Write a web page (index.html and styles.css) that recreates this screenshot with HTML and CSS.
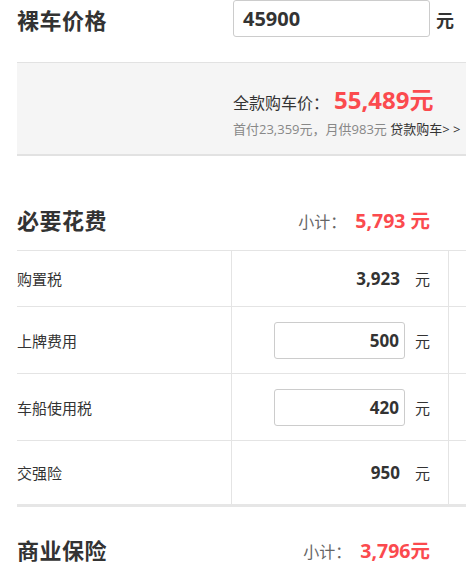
FILE: index.html
```html
<!DOCTYPE html>
<html lang="zh">
<head>
<meta charset="utf-8">
<link rel="stylesheet" href="styles.css">
</head>
<body>
<div class="page">
  <div class="price-row">
    <div class="big-title">裸车价格</div>
    <div class="price-input">45900</div>
    <div class="price-unit">元</div>
  </div>

  <div class="summary">
    <div class="total-line"><span class="total-label">全款购车价：</span><span class="total-num">55,489元</span></div>
    <div class="loan-line">首付23,359元，月供983元 <span class="loan-link">贷款购车&gt; &gt;</span></div>
  </div>

  <div class="section-head first">
    <div class="big-title">必要花费</div>
    <div class="subtotal"><span class="sub-label">小计：</span><span class="sub-num">5,793 元</span></div>
  </div>

  <div class="fee-table">
    <div class="row r1">
      <div class="c-label">购置税</div>
      <div class="c-val"><span class="val">3,923</span><span class="unit">元</span></div>
      <div class="c-extra"></div>
    </div>
    <div class="row r2">
      <div class="c-label">上牌费用</div>
      <div class="c-val"><span class="val-input">500</span><span class="unit in">元</span></div>
      <div class="c-extra"></div>
    </div>
    <div class="row r2">
      <div class="c-label">车船使用税</div>
      <div class="c-val"><span class="val-input">420</span><span class="unit in">元</span></div>
      <div class="c-extra"></div>
    </div>
    <div class="row r4">
      <div class="c-label">交强险</div>
      <div class="c-val"><span class="val">950</span><span class="unit">元</span></div>
      <div class="c-extra"></div>
    </div>
  </div>

  <div class="section-head second">
    <div class="big-title">商业保险</div>
    <div class="subtotal"><span class="sub-label">小计：</span><span class="sub-num">3,796元</span></div>
  </div>
</div>
</body>
</html>
```

FILE: styles.css
```css
html, body {
  margin: 0;
  padding: 0;
  overflow: hidden;
  background: #fff;
}
body {
  font-family: "Open Sans", "Noto Sans CJK SC", sans-serif;
  color: #333;
}
.page {
  width: 540px;
  padding-left: 17px;
}
.price-row {
  display: flex;
  align-items: center;
  height: 37px;
}
.big-title {
  font-size: 22px;
  font-weight: bold;
  color: #333;
  letter-spacing: 0.5px;
}
.price-row .big-title {
  width: 216px;
  flex: none;
}
.price-input {
  box-sizing: border-box;
  width: 197px;
  height: 37px;
  border: 1px solid #ccc;
  border-radius: 3px;
  font-size: 20px;
  font-weight: bold;
  line-height: 35px;
  padding-left: 9px;
  color: #333;
}
.price-unit {
  margin-left: 6px;
  font-size: 18px;
  font-weight: bold;
}
.summary {
  margin-top: 25px;
  border-top: 1px solid #e2e2e2;
  border-bottom: 2px solid #e2e2e2;
  background: #f5f5f5;
  padding: 25px 0 16px 216px;
}
.total-line {
  display: flex;
  align-items: baseline;
  height: 24px;
  line-height: 24px;
}
.total-label {
  font-size: 16px;
  color: #333;
}
.total-num {
  font-size: 24px;
  font-weight: bold;
  color: #fb4a4e;
  margin-left: 5px;
}
.loan-line {
  margin-top: 8px;
  font-size: 13px;
  line-height: 18px;
  color: #888;
  white-space: nowrap;
}
.loan-link {
  color: #333;
}
.section-head {
  display: flex;
  align-items: center;
  justify-content: space-between;
  width: 413px;
  height: 62px;
}
.section-head.first {
  margin-top: 32px;
}
.section-head.second {
  margin-top: 11px;
}
.subtotal {
  display: flex;
  align-items: baseline;
}
.sub-label {
  font-size: 16px;
  color: #666;
}
.sub-num {
  font-size: 19.5px;
  font-weight: bold;
  color: #fb4a4e;
  margin-left: 9px;
}
.second .sub-num {
  margin-left: 9px;
}
.fee-table {
  border-bottom: 3px solid #e6e6e6;
}
.row {
  display: grid;
  grid-template-columns: 214px 217px 1fr;
  border-top: 1px solid #e4e4e4;
}
.r1 { height: 55px; }
.r2 { height: 66px; }
.r4 { height: 63px; }
.c-label {
  display: flex;
  align-items: center;
  font-size: 15px;
  color: #333;
}
.c-val {
  display: flex;
  align-items: center;
  justify-content: flex-end;
  border-left: 1px solid #e4e4e4;
  padding-right: 18px;
}
.c-extra {
  border-left: 1px solid #e4e4e4;
}
.val {
  font-size: 17px;
  font-weight: bold;
  color: #333;
}
.val-input {
  box-sizing: border-box;
  width: 131px;
  height: 37px;
  border: 1px solid #ccc;
  border-radius: 3px;
  text-align: right;
  padding-right: 5px;
  font-size: 17px;
  font-weight: bold;
  line-height: 35px;
  color: #333;
}
.unit {
  font-size: 15px;
  color: #333;
  margin-left: 15px;
}
.unit.in {
  margin-left: 10px;
}
```
